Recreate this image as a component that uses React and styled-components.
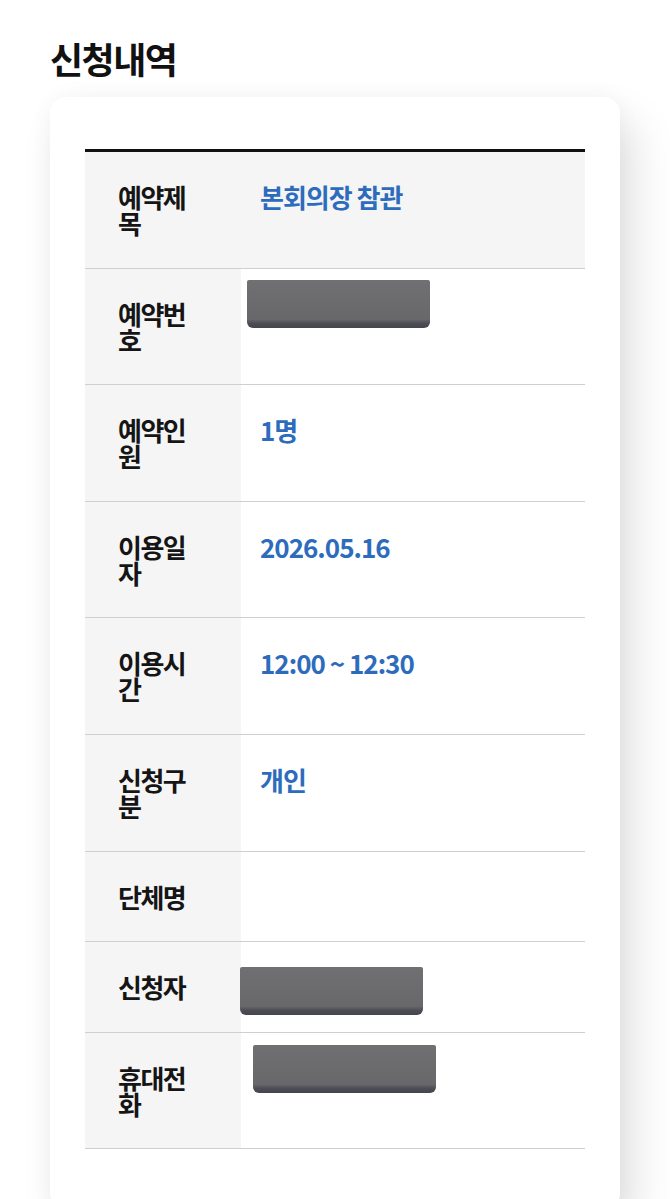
import React from "react";
import styled, { createGlobalStyle } from "styled-components";

const Global = createGlobalStyle`
  html, body { margin: 0; padding: 0; background: #ffffff; }
  body { font-family: "Noto Sans CJK KR", "Noto Sans", sans-serif; }
  * { box-sizing: border-box; }
`;

const Page = styled.div`
  padding: 36px 50px 0 50px;
  height: 1199px;
  overflow: hidden;
`;

const Title = styled.h2`
  margin: 0 0 17px 0;
  font-size: 36px;
  line-height: 44px;
  font-weight: 700;
  letter-spacing: -1.5px;
  color: #111;
`;

const Card = styled.div`
  width: 570px;
  background: #fff;
  border-radius: 16px;
  padding: 52px 35px 60px 35px;
  box-shadow: 14px 24px 44px rgba(0, 0, 0, 0.12), 0 0 24px rgba(0, 0, 0, 0.04);
`;

const Table = styled.div`
  border-top: 3px solid #111;
`;

const Row = styled.div`
  display: grid;
  grid-template-columns: 156px 1fr;
  border-bottom: 1px solid #cfcfcf;
  background: ${(p) => (p.$shaded ? "#f5f5f5" : "#fff")};
`;

const Label = styled.div`
  background: #f5f5f5;
  padding: 32px 45px 31.6px 33px;
  font-size: 26px;
  line-height: 26px;
  font-weight: 700;
  letter-spacing: -1.5px;
  color: #151515;
  word-break: break-all;
`;

const Value = styled.div`
  padding: 32px 19px 31.6px 19px;
  font-size: 26px;
  line-height: 26px;
  font-weight: 600;
  letter-spacing: -1px;
  color: #2d6cbd;
`;

const Redact = styled.div`
  width: 183px;
  height: 48px;
  margin-left: ${(p) => p.$dx}px;
  margin-top: ${(p) => p.$dy}px;
  margin-bottom: ${(p) => -48 - p.$dy + 26}px;
  background: linear-gradient(180deg, #707072 0%, #68686a 82%, #4d4d55 90%, #45454d 100%);
  border-radius: 2px 2px 6px 6px;
`;

const rows = [
  { label: "예약제목", value: "본회의장 참관", shaded: true },
  { label: "예약번호", redact: { dx: -13, dy: -21 } },
  { label: "예약인원", value: "1명" },
  { label: "이용일자", value: "2026.05.16" },
  { label: "이용시간", value: "12:00 ~ 12:30" },
  { label: "신청구분", value: "개인" },
  { label: "단체명", value: "" },
  { label: "신청자", redact: { dx: -20, dy: -7 } },
  { label: "휴대전화", redact: { dx: -7, dy: -20 } },
];

export default function App() {
  return (
    <>
      <Global />
      <Page>
        <Title>신청내역</Title>
        <Card>
          <Table>
            {rows.map((r) => (
              <Row key={r.label} $shaded={r.shaded}>
                <Label>{r.label}</Label>
                <Value>
                  {r.redact ? <Redact $dx={r.redact.dx} $dy={r.redact.dy} /> : r.value}
                </Value>
              </Row>
            ))}
          </Table>
        </Card>
      </Page>
    </>
  );
}
